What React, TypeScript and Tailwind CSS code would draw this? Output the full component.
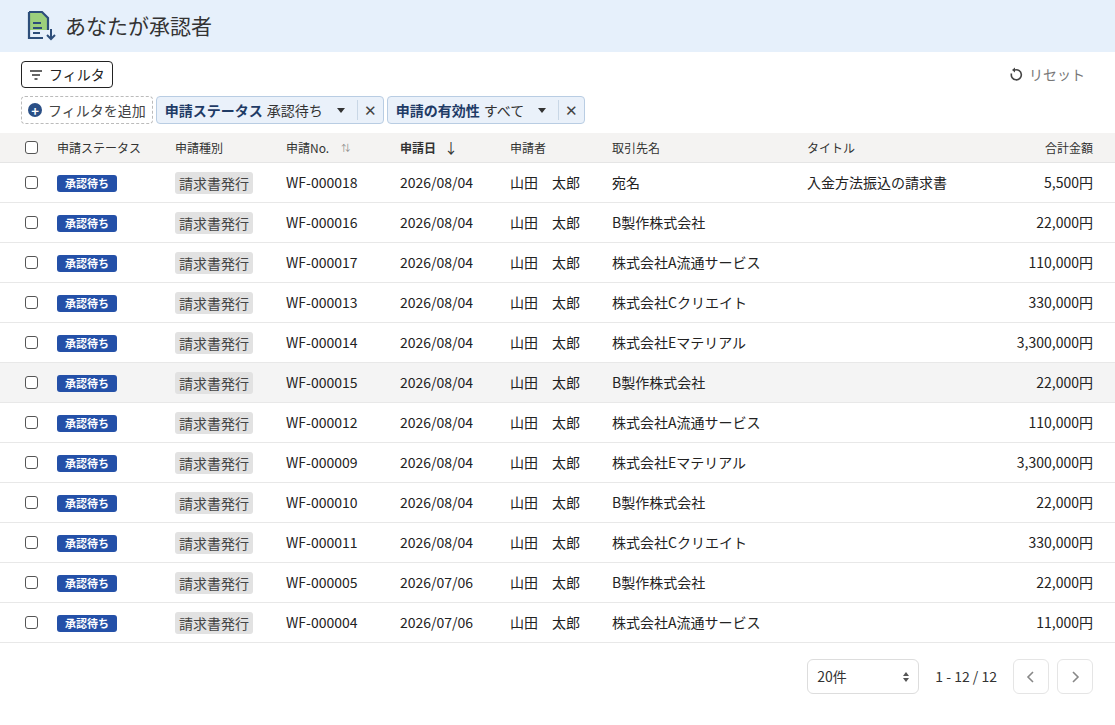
import React from "react";

const rows = [
  ["WF-000018","2026/08/04","宛名","入金方法振込の請求書","5,500円"],
  ["WF-000016","2026/08/04","B製作株式会社","","22,000円"],
  ["WF-000017","2026/08/04","株式会社A流通サービス","","110,000円"],
  ["WF-000013","2026/08/04","株式会社Cクリエイト","","330,000円"],
  ["WF-000014","2026/08/04","株式会社Eマテリアル","","3,300,000円"],
  ["WF-000015","2026/08/04","B製作株式会社","","22,000円"],
  ["WF-000012","2026/08/04","株式会社A流通サービス","","110,000円"],
  ["WF-000009","2026/08/04","株式会社Eマテリアル","","3,300,000円"],
  ["WF-000010","2026/08/04","B製作株式会社","","22,000円"],
  ["WF-000011","2026/08/04","株式会社Cクリエイト","","330,000円"],
  ["WF-000005","2026/07/06","B製作株式会社","","22,000円"],
  ["WF-000004","2026/07/06","株式会社A流通サービス","","11,000円"],
];

const Cb = () => <div className="w-[13px] h-[13px] border border-[#555] rounded-[3px] bg-white" />;

const Chip = ({ k, v }: { k: string; v: string }) => (
  <div className="flex items-center h-[28px] border border-[#b9cde3] bg-[#eaf1fa] rounded-[4px] text-[14px]">
    <div className="flex items-center gap-1 pl-2 pr-2">
      <span className="font-bold text-[#1f3b66]">{k}</span>
      <span className="text-[#333]">{v}</span>
      <svg width="8" height="5" viewBox="0 0 8 5" className="ml-[10px] mr-[4px]"><path d="M0 0h8L4 5z" fill="#333" /></svg>
    </div>
    <div className="w-px h-[20px] bg-[#c9d7e6]" />
    <div className="px-[6px] text-[#444] text-[15px]">✕</div>
  </div>
);

export default function App() {
  return (
    <div className="w-[1115px] h-[725px] bg-white text-[#222]" style={{ fontFamily: '"Noto Sans CJK JP", "Noto Sans", sans-serif' }}>
      <div className="h-[52px] bg-[#e6f0fb] flex items-center pl-[26px] gap-[9px]">
        <svg width="30" height="34" viewBox="0 0 30 34">
          <path d="M4 4h12l6 6v11H4z" fill="#9ccf7c" />
          <path d="M3 3h13l6 6v12" fill="none" stroke="#2d4e7a" strokeWidth="2.2" />
          <path d="M3 3v26h14" fill="none" stroke="#2d4e7a" strokeWidth="2.2" />
          <path d="M7 14h8M7 19h9M7 24h7" stroke="#2d4e7a" strokeWidth="2" />
          <path d="M25 20v10M21 26l4 4 4-4" fill="none" stroke="#2d4e7a" strokeWidth="2" />
        </svg>
        <span className="text-[21px] text-[#333]">あなたが承認者</span>
      </div>
      <div className="flex justify-between items-center pl-[21px] pr-[30px] mt-[9px]">
        <div className="flex items-center gap-[6px] h-[27px] px-[7px] border border-[#222] rounded-[4px] text-[14px]">
          <svg width="14" height="10" viewBox="0 0 14 10"><path d="M1 1h12M3 5h8M5.5 9h3" stroke="#333" strokeWidth="1.4" /></svg>
          フィルタ
        </div>
        <div className="flex items-center gap-[6px] text-[14px] text-[#777]">
          <svg width="16" height="16" viewBox="0 0 16 16"><path d="M4.5 6.5A5 5 0 1 0 8 3" fill="none" stroke="#444" strokeWidth="1.6" /><path d="M8 0.5v5l-3-2.5z" fill="#444" /></svg>
          リセット
        </div>
      </div>
      <div className="flex items-center gap-[3px] pl-[21px] mt-[8px]">
        <div className="flex items-center gap-[6px] h-[28px] px-[6px] border border-dashed border-[#bbb] rounded-[4px] text-[14px] text-[#444]">
          <div className="w-[14px] h-[14px] rounded-full bg-[#2a4f86] text-white flex items-center justify-center text-[13px] font-bold leading-none">+</div>
          フィルタを追加
        </div>
        <Chip k="申請ステータス" v="承認待ち" />
        <Chip k="申請の有効性" v="すべて" />
      </div>
      <div className="mt-[9px]">
        <div className="flex items-center h-[30px] bg-[#f4f3f2] text-[12px] text-[#333] border-b border-[#e5e5e5]">
          <div className="w-[57px] pl-[25px]"><Cb /></div>
          <div className="w-[118px]">申請ステータス</div>
          <div className="w-[111px]">申請種別</div>
          <div className="w-[114px] flex items-center gap-3">申請No.<span className="text-[9px] text-[#888]">⇅</span></div>
          <div className="w-[110px] font-bold flex items-center gap-2">申請日<span className="text-[14px] font-normal">↓</span></div>
          <div className="w-[102px]">申請者</div>
          <div className="w-[195px]">取引先名</div>
          <div className="w-[150px]">タイトル</div>
          <div className="flex-1 text-right pr-[22px]">合計金額</div>
        </div>
        {rows.map((r, i) => (
          <div key={i} className={`flex items-center h-[40px] text-[14px] border-b border-[#e8e8e8] ${i === 5 ? "bg-[#f4f4f4]" : ""}`}>
            <div className="w-[57px] pl-[25px]"><Cb /></div>
            <div className="w-[118px]"><span className="inline-block bg-[#2450a8] text-white text-[11px] font-bold rounded-[3px] px-[8px] leading-[17px]">承認待ち</span></div>
            <div className="w-[111px]"><span className="inline-block bg-[#e2e2e2] text-[#444] rounded-[3px] px-[4px] leading-[22px]">請求書発行</span></div>
            <div className="w-[114px]">{r[0]}</div>
            <div className="w-[110px]">{r[1]}</div>
            <div className="w-[102px]">山田　太郎</div>
            <div className="w-[195px]">{r[2]}</div>
            <div className="w-[150px] whitespace-nowrap">{r[3]}</div>
            <div className="flex-1 text-right pr-[22px]">{r[4]}</div>
          </div>
        ))}
      </div>
      <div className="flex justify-end items-center pr-[22px] mt-[16px] text-[14px] text-[#333]">
        <div className="w-[112px] h-[35px] border border-[#ddd] rounded-[6px] flex items-center justify-between px-[9px]">
          20件
          <svg width="6" height="10" viewBox="0 0 6 10"><path d="M0 4h6L3 0z M0 6h6L3 10z" fill="#555" /></svg>
        </div>
        <div className="mx-[16px]">1 - 12 / 12</div>
        <div className="w-[36px] h-[35px] border border-[#e5e5e5] rounded-[6px] flex items-center justify-center">
          <svg width="10" height="12" viewBox="0 0 10 12"><path d="M7 1L2 6l5 5" fill="none" stroke="#888" strokeWidth="1.6" /></svg>
        </div>
        <div className="w-[36px] h-[35px] border border-[#e5e5e5] rounded-[6px] flex items-center justify-center ml-[8px]">
          <svg width="10" height="12" viewBox="0 0 10 12"><path d="M3 1l5 5-5 5" fill="none" stroke="#888" strokeWidth="1.6" /></svg>
        </div>
      </div>
    </div>
  );
}
